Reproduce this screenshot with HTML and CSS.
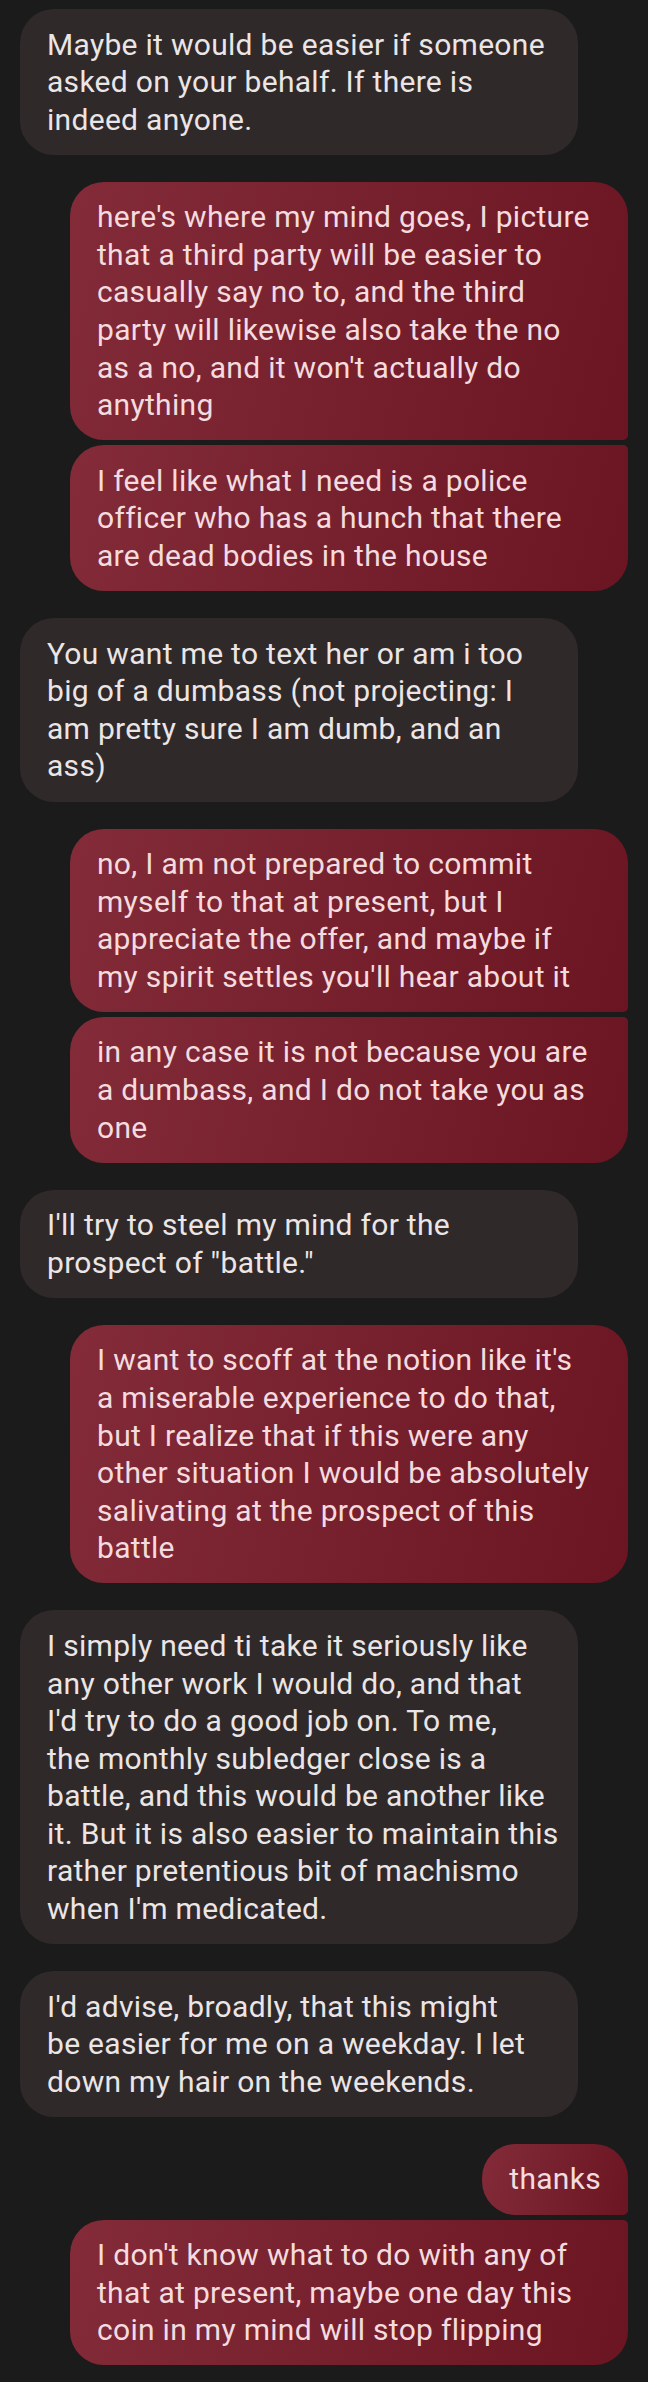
FILE: index.html
```html
<!DOCTYPE html>
<html>
<head>
<meta charset="utf-8">
<link rel="stylesheet" href="styles.css">
</head>
<body>
<div class="thread">
  <div class="group in">
    <div class="bubble">Maybe it would be easier if someone<br>asked on your behalf. If there is<br>indeed anyone.</div>
  </div>
  <div class="group out">
    <div class="bubble">here's where my mind goes, I picture<br>that a third party will be easier to<br>casually say no to, and the third<br>party will likewise also take the no<br>as a no, and it won't actually do<br>anything</div>
    <div class="bubble">I feel like what I need is a police<br>officer who has a hunch that there<br>are dead bodies in the house</div>
  </div>
  <div class="group in">
    <div class="bubble">You want me to text her or am i too<br>big of a dumbass (not projecting: I<br>am pretty sure I am dumb, and an<br>ass)</div>
  </div>
  <div class="group out">
    <div class="bubble">no, I am not prepared to commit<br>myself to that at present, but I<br>appreciate the offer, and maybe if<br>my spirit settles you'll hear about it</div>
    <div class="bubble">in any case it is not because you are<br>a dumbass, and I do not take you as<br>one</div>
  </div>
  <div class="group in">
    <div class="bubble">I'll try to steel my mind for the<br>prospect of "battle."</div>
  </div>
  <div class="group out">
    <div class="bubble">I want to scoff at the notion like it's<br>a miserable experience to do that,<br>but I realize that if this were any<br>other situation I would be absolutely<br>salivating at the prospect of this<br>battle</div>
  </div>
  <div class="group in">
    <div class="bubble">I simply need ti take it seriously like<br>any other work I would do, and that<br>I'd try to do a good job on. To me,<br>the monthly subledger close is a<br>battle, and this would be another like<br>it. But it is also easier to maintain this<br>rather pretentious bit of machismo<br>when I'm medicated.</div>
  </div>
  <div class="group in">
    <div class="bubble">I'd advise, broadly, that this might<br>be easier for me on a weekday. I let<br>down my hair on the weekends.</div>
  </div>
  <div class="group out">
    <div class="bubble short">thanks</div>
    <div class="bubble">I don't know what to do with any of<br>that at present, maybe one day this<br>coin in my mind will stop flipping</div>
  </div>
</div>
</body>
</html>
```
FILE: styles.css
```css
html, body {
  margin: 0;
  padding: 0;
  background: #1c1b1b;
}
.thread {
  display: flex;
  flex-direction: column;
  gap: 27px;
  padding: 9px 20px 16px 20px;
  font-family: Roboto, "Noto Sans", sans-serif;
  font-size: 30px;
  line-height: 37.6px;
  letter-spacing: 0.3px;
}
.group {
  display: flex;
  flex-direction: column;
  gap: 5px;
  width: 558px;
}
.group.in { align-self: flex-start; }
.group.out { align-self: flex-end; }
.bubble {
  padding: 16.5px 27px;
  border-radius: 34px;
  white-space: nowrap;
}
.bubble.short { align-self: flex-end; }
.in .bubble {
  background: #2f292a;
  color: #ebe5e5;
}
.out .bubble {
  background: linear-gradient(105deg, #832b38 0%, #7a2330 40%, #6c1522 100%);
  color: #f3dbdf;
}
.out .bubble:not(:last-child) { border-bottom-right-radius: 5px; }
.out .bubble:not(:first-child) { border-top-right-radius: 5px; }
```
